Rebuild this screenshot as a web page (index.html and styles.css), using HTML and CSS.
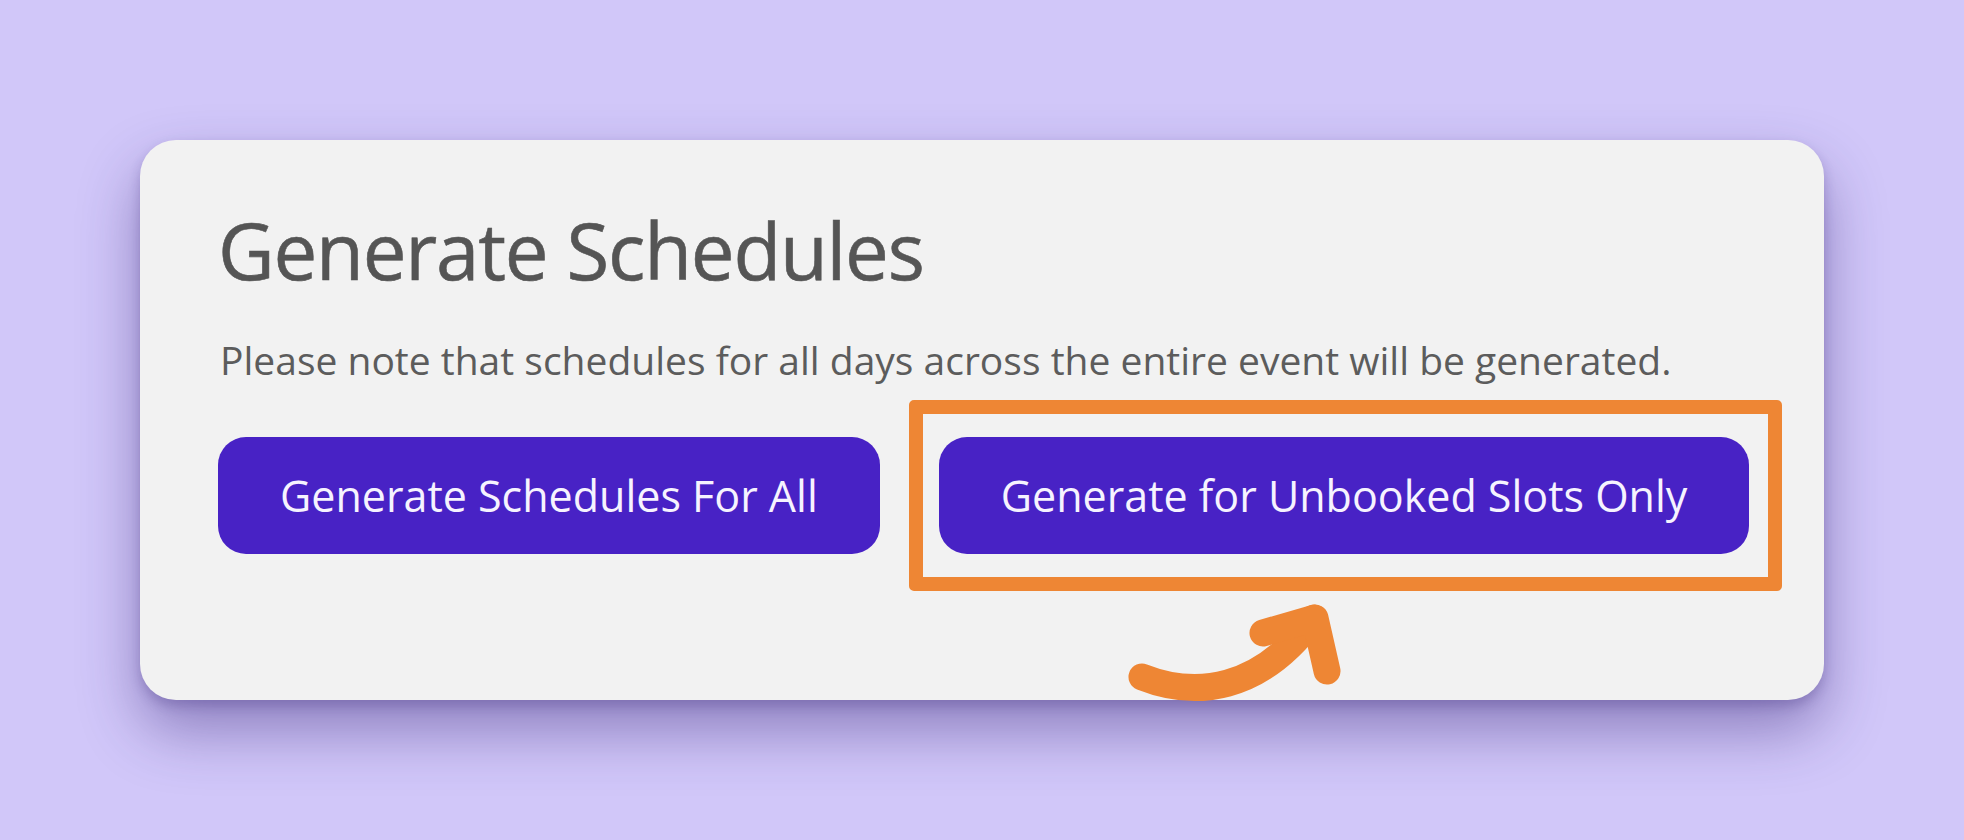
FILE: index.html
```html
<!DOCTYPE html>
<html lang="en">
	<head>
		<title>Generate Schedules</title>
		<meta charset="utf-8">
		<link rel="stylesheet" href="styles.css">
	</head>
	<body>
		<div class="card">
			<h1 class="card-title">Generate Schedules</h1>
			<p class="card-note">Please note that schedules for all days across the entire event will be generated.</p>
			<div class="actions">
				<button class="btn">Generate Schedules For All</button>
				<div class="highlight">
					<button class="btn">Generate for Unbooked Slots Only</button>
					<span class="highlight-box"></span>
				</div>
			</div>

			<!-- hand drawn arrow pointing at the highlighted button -->
			<svg class="arrow" width="240" height="150" viewBox="0 0 240 150">
				<path d="M32 107 C 85 128, 150 122, 204 48" fill="none" stroke="#ee8634" stroke-width="27" stroke-linecap="round"/>
				<path d="M153 63 L205 48 L217 101" fill="none" stroke="#ee8634" stroke-width="27" stroke-linecap="round" stroke-linejoin="round"/>
			</svg>
		</div>
	</body>
</html>
```

FILE: styles.css
```css
html {
	background-color: #d1c7f9;
}

body {
	margin: 0px;
	padding: 140px 0 140px 140px;
	min-height: 840px;
	box-sizing: border-box;
	background-color: #d1c7f9;
	font-family: "Open Sans", "Noto Sans", sans-serif;
}

.card {
	position: relative;
	box-sizing: border-box;
	width: 1684px;
	height: 560px;
	padding: 64px 80px 0 78px;
	background-color: #f2f2f2;
	border-radius: 36px;
	box-shadow: 0 30px 60px rgba(46, 26, 110, 0.42), 0 6px 12px rgba(46, 26, 110, 0.22);
}

.card-title {
	margin: 0;
	font-size: 78px;
	font-weight: 400;
	line-height: 1.2;
	letter-spacing: -1.2px;
	color: #555555;
	-webkit-text-stroke: 0.6px #555555;
}

.card-note {
	margin: 37px 0 0 2px;
	font-size: 39px;
	line-height: 1.3;
	color: #5c5c5c;
}

.actions {
	display: flex;
	align-items: center;
	gap: 59px;
	margin-top: 52px;
}

.btn {
	display: flex;
	align-items: center;
	height: 117px;
	padding: 0 62px;
	border: 0;
	border-radius: 28px;
	background-color: #4822c5;
	color: #f6f3ff;
	font-family: "Open Sans", "Noto Sans", sans-serif;
	font-size: 43px;
	white-space: nowrap;
}

.highlight {
	position: relative;
}

.highlight-box {
	position: absolute;
	top: -37px;
	right: -33px;
	bottom: -37px;
	left: -30px;
	border: 14px solid #ee8634;
	border-radius: 5px;
}

.arrow {
	position: absolute;
	left: 970px;
	top: 430px;
	overflow: visible;
}
```
